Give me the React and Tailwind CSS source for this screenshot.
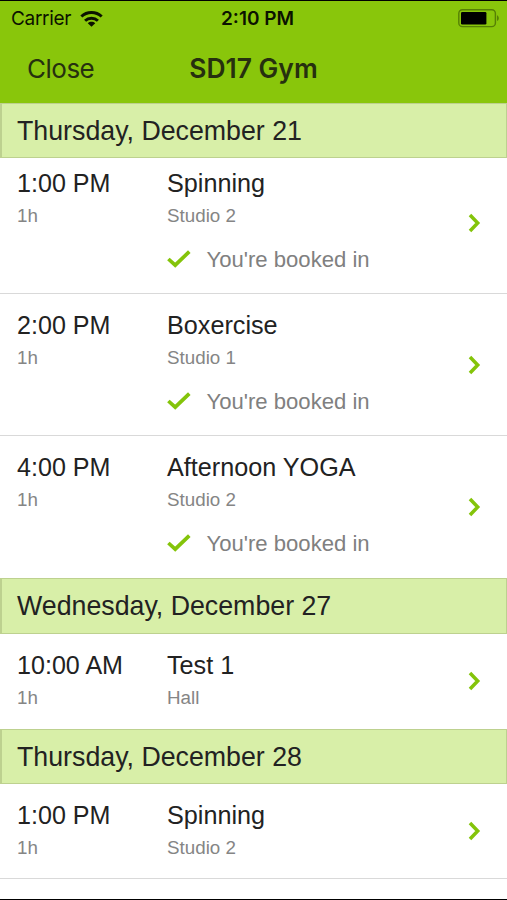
import React from "react";

const days = [
  {
    date: "Thursday, December 21",
    classes: [
      { time: "1:00 PM", duration: "1h", name: "Spinning", room: "Studio 2", booked: true },
      { time: "2:00 PM", duration: "1h", name: "Boxercise", room: "Studio 1", booked: true },
      { time: "4:00 PM", duration: "1h", name: "Afternoon YOGA", room: "Studio 2", booked: true },
    ],
  },
  {
    date: "Wednesday, December 27",
    classes: [{ time: "10:00 AM", duration: "1h", name: "Test 1", room: "Hall" }],
  },
  {
    date: "Thursday, December 28",
    classes: [{ time: "1:00 PM", duration: "1h", name: "Spinning", room: "Studio 2" }],
  },
];

const WifiIcon = () => (
  <svg width="23" height="17" viewBox="0 0 24 17" fill="none" stroke="#0b1200" strokeWidth="3.1">
    <path d="M1.4 5.4C7.3 -0.2 16.7 -0.2 22.6 5.4" />
    <path d="M5.3 9.8C9 6.2 15 6.2 18.7 9.8" />
    <path d="M12 16L8.1 12.3C10.3 10.3 13.7 10.3 15.9 12.3Z" fill="#0b1200" stroke="none" />
  </svg>
);

const BatteryIcon = () => (
  <svg width="42" height="19" viewBox="0 0 42 19">
    <rect x="0.8" y="0.8" width="36.6" height="16.8" rx="3.6" fill="none" stroke="#568005" strokeWidth="1.4" />
    <rect x="3" y="3" width="25.4" height="12.4" rx="1.2" fill="#000" />
    <path d="M39 6.2C41.4 7 41.4 11.2 39 12Z" fill="#568005" />
  </svg>
);

const CheckIcon = () => (
  <svg width="24" height="20" viewBox="0 0 24 20" fill="none" stroke="#84c40a" strokeWidth="3.7">
    <path d="M1.4 9L8.2 15.2L22.3 1.6" />
  </svg>
);

const ChevronIcon = () => (
  <svg width="13" height="20" viewBox="0 0 13 20" fill="none" stroke="#84c40a" strokeWidth="3.5">
    <path d="M2 2L9.7 10L2 18" />
  </svg>
);

const ClassRow = ({ item, first, last }) => (
  <div
    className={`flex bg-white pl-[17px] pr-[26px] ${item.booked ? "h-[142px]" : "h-[95px]"} ${
      last ? "" : "border-b border-[#d9d9d9]"
    } ${first ? "-mt-1.5" : ""}`}
  >
    <div className="w-[150px] pt-4">
      <div className="text-[25.1px] leading-[30px] text-[#222]">{item.time}</div>
      <div className="pt-1.5 text-[18.8px] leading-6 text-[#858585]">{item.duration}</div>
    </div>
    <div className="flex-1 pt-4">
      <div className="text-[25.2px] leading-[30px] text-[#222]">{item.name}</div>
      <div className="pt-1.5 text-[18.8px] leading-6 text-[#858585]">{item.room}</div>
      {item.booked && (
        <div className="flex items-center gap-[15.5px] pt-[18px] text-[22.1px] leading-7 text-[#808080]">
          <CheckIcon />
          <span>You're booked in</span>
        </div>
      )}
    </div>
    <div className="flex items-center">
      <ChevronIcon />
    </div>
  </div>
);

const App = () => {
  return (
    <div className="flex h-[900px] w-[507px] flex-col overflow-hidden border-y border-black bg-white font-['Liberation_Sans',Arial,sans-serif]">
      {/* Navbar */}
      <header className="h-[101.5px] shrink-0 bg-[#89c60b] font-['Inter',sans-serif]">
        <div className="grid h-[34px] grid-cols-3 items-center pl-[11px] pr-[7px] text-[19px] text-[#0b1200]">
          <div className="flex items-center gap-[9px] pt-0.5">
            <span className="tracking-[-0.3px]">Carrier</span>
            <WifiIcon />
          </div>
          <span className="pt-0.5 pl-1 text-center text-[19px] font-semibold">2:10 PM</span>
          <div className="flex justify-end">
            <BatteryIcon />
          </div>
        </div>
        <div className="grid h-[66px] grid-cols-3 items-center px-[27px] text-[26px] text-[#26300f]">
          <button className="text-left tracking-[-0.5px]">Close</button>
          <h1 className="pt-0.5 text-center text-[26.4px] font-semibold whitespace-nowrap">SD17 Gym</h1>
        </div>
      </header>

      {/* Timetable */}
      {days.map((day, i) => (
        <section key={day.date} className="shrink-0">
          <h2 className="relative z-10 h-[55.5px] border border-l-2 border-[#bdd18f] bg-[#d8efa8] pl-[15px] text-[26.75px] leading-[54px] text-[#222]">
            {day.date}
          </h2>
          {day.classes.map((item, j) => (
            <ClassRow
              key={item.time}
              item={item}
              first={i === 0 && j === 0}
              last={j === day.classes.length - 1 && i < days.length - 1}
            />
          ))}
        </section>
      ))}
    </div>
  );
};

export default App;
